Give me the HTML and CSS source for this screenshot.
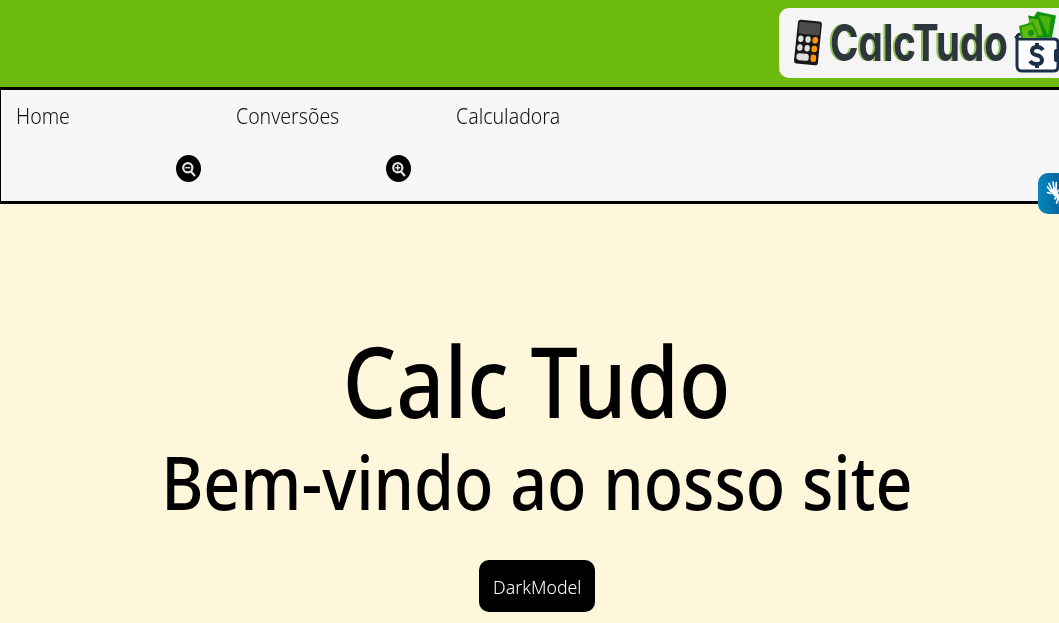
FILE: index.html
```html
<!DOCTYPE html>
<html lang="pt-BR">
<head>
<meta charset="utf-8">
<title>Calc Tudo</title>
<link rel="stylesheet" href="styles.css">
</head>
<body>
<header class="header">
  <div class="brand">
    <svg class="logo" width="290" height="70" viewBox="779 8 290 70">
      <g transform="rotate(6 808 42)">
        <rect x="796" y="20.500" width="24" height="44" rx="3" fill="#171717"/>
        <rect x="797.5" y="22.500" width="21" height="12" rx="1.5" fill="#4b4b4b"/>
        <g fill="#dedede"><ellipse cx="800.5" cy="39.5" rx="2.7" ry="3.2"/><ellipse cx="807.8" cy="39.5" rx="2.7" ry="3.2"/><ellipse cx="800.5" cy="48.3" rx="2.7" ry="3.2"/><ellipse cx="807.8" cy="48.3" rx="2.7" ry="3.2"/><rect x="798" y="54" width="12.4" height="7" rx="3"/></g>
        <g fill="#ff9500"><ellipse cx="815" cy="39.5" rx="2.9" ry="3.3"/><ellipse cx="815" cy="48.3" rx="2.9" ry="3.3"/><rect x="812.2" y="54" width="5.6" height="7.4" rx="2.4"/></g>
      </g>
      <text class="wordmark" x="830" y="60.5" textLength="178" lengthAdjust="spacingAndGlyphs">CalcTudo</text>
      <path d="M1021 34q-4 0-4 4v28q0 5 5 5h32q4 0 4-5V43q0-4-4-4h-33q-5 0-5-3" fill="#fff" stroke="#1c304a" stroke-width="3"/>
      <path d="M1037 11.500l19 4-4 22h-14l-5-19z" fill="#13940f"/>
      <path d="M1040 15l11 2.500-3 18-6-14-4-2z" fill="#48b40b"/>
      <path d="M1028 15.500l12 2 7 20h-14z" fill="#118f12"/>
      <path d="M1030 18.500l8 1 5 16h-4l-6-11-5-1z" fill="#5bb70b"/>
      <path d="M1019 26l14-4 6 14-1 2h-17z" fill="#27990f"/>
      <path d="M1022 27.500l10-3 5 11-1 2.500h-13z" fill="#61bb0a"/>
      <circle cx="1031" cy="33" r="3" fill="#168f12"/>
      <path d="M1060 49v13h-4q-2 0-2-2v-9q0-2 2-2z" fill="#1c304a"/>
      <path d="M1043 50q-2-3-6-3c-6 0-7 7-1 8 8 1 8 10 0 9q-4 0-6-3M1037 43v5m0 15v5" fill="none" stroke="#1c304a" stroke-width="4"/>
    </svg>
  </div>
</header>
<nav class="nav">
  <div class="links">
    <a href="#"><span class="home">Home</span></a>
    <a href="#"><span class="conv">Conversões</span></a>
    <a href="#"><span class="calc">Calculadora</span></a>
  </div>
  <div class="zoom-row">
    <button class="zoom" aria-label="Diminuir"><svg width="25" height="27" viewBox="0 0 25 27"><ellipse cx="12.500" cy="13.500" rx="12.500" ry="13.500"/><path class="lens" d="M14.500 16l4.500 5"/><circle class="lens" cx="11.800" cy="12.700" r="4.600"/><path class="sign" d="M9.300 12.700h5"/></svg></button>
    <button class="zoom" aria-label="Aumentar"><svg width="25" height="27" viewBox="0 0 25 27"><ellipse cx="12.500" cy="13.500" rx="12.500" ry="13.500"/><path class="lens" d="M14.500 16l4.500 5"/><circle class="lens" cx="11.800" cy="12.700" r="4.600"/><path class="sign" d="M9.300 12.700h5m-2.500-2.700v5.400"/></svg></button>
  </div>
</nav>
<main class="hero">
  <h1 class="title">Calc Tudo</h1>
  <h2 class="subtitle">Bem-vindo ao nosso site</h2>
  <button class="dark"><span class="dark-label">DarkModel</span></button>
</main>
<div class="access">
  <svg width="41" height="41" viewBox="0 0 41 41">
    <defs><linearGradient id="blue" x1="0" x2="1" y1="0" y2="0"><stop stop-color="#0787bb"/><stop offset=".7" stop-color="#035c98"/></linearGradient></defs>
    <rect width="41" height="41" rx="10" fill="url(#blue)"/>
    <g fill="none" stroke="#fff" stroke-linecap="round" stroke-width="1.700"><path d="M12.500 18l-3-4M14 17l-3-6.500M16 16l-1-7M18 17l.3-7.500M13 20.500l-3.500-1"/><path d="M20 26l-1.500 4M22 26l-.5 5M18 23l-1 3"/></g>
    <path d="M11.500 17l6-2 1.500 3 1-2 1 1-2 6h-3zM18 23l5-4v9l-4-1z" fill="#fff"/>
  </svg>
</div>
</body>
</html>
```
FILE: styles.css
```css
* { box-sizing: border-box; }
html, body { height: 100%; }
body {
  margin: 0;
  overflow: hidden;
  display: flex;
  flex-direction: column;
  background: #fff7dc;
  font-family: "Noto Sans", "Open Sans", sans-serif;
}
.header {
  flex: none;
  height: 87px;
  padding-top: 8px;
  display: flex;
  justify-content: flex-end;
  overflow: hidden;
  background: #6cbb0e;
}
.brand {
  flex: none;
  width: 290px;
  height: 70px;
  margin-right: -10px;
  border-radius: 10px;
  background: #f5f5f5;
}
.logo { display: block; }
.wordmark {
  font-family: Inter, sans-serif;
  font-feature-settings: "cv11";
  font-size: 51px;
  font-weight: 700;
  fill: #2d353d;
  filter: drop-shadow(-2px 0 0 #8cc456);
}
.nav {
  flex: none;
  height: 117px;
  padding-top: 11px;
  border: solid #000;
  border-width: 3px 0 3px 1px;
  background: #f6f6f6;
}
.links { display: flex; padding-left: 15px; }
.links a {
  width: 220px;
  height: 32px;
  line-height: 30px;
  font-size: 21px;
  font-weight: 300;
  color: #111;
  text-decoration: none;
}
.links span, .dark-label { display: inline-block; transform-origin: left; }
.home { transform: scaleX(.93); }
.conv { transform: scaleX(.927); }
.calc { transform: scaleX(.93); }
.zoom-row { display: flex; gap: 185px; padding: 22px 0 0 175px; }
.zoom { padding: 0; border: 0; background: none; }
.zoom svg { display: block; }
.lens { fill: none; stroke: #e2e2e2; stroke-width: 2.2; }
.sign { fill: none; stroke: #ddd; stroke-width: 1.5; }
.hero {
  flex: 1;
  display: flex;
  flex-direction: column;
  align-items: center;
  padding: 118px 0 0 15px;
}
.title, .subtitle { margin: 0; white-space: nowrap; font-weight: 500; color: #000; }
.title { font-size: 99px; line-height: 116px; transform: scaleX(.852); }
.subtitle { font-size: 75px; line-height: 86px; transform: scaleX(.86); }
.dark {
  flex: none;
  width: 116px;
  height: 52px;
  margin-top: 36px;
  padding: 0 0 0 14px;
  border: 0;
  border-radius: 10px;
  background: #000;
  color: #fff;
  font: 300 18.500px/54px "Noto Sans", sans-serif;
  text-align: left;
}
.dark-label { transform: scaleX(.96); }
.access { position: absolute; left: 1038px; top: 173px; width: 21px; height: 41px; overflow: hidden; }
```
